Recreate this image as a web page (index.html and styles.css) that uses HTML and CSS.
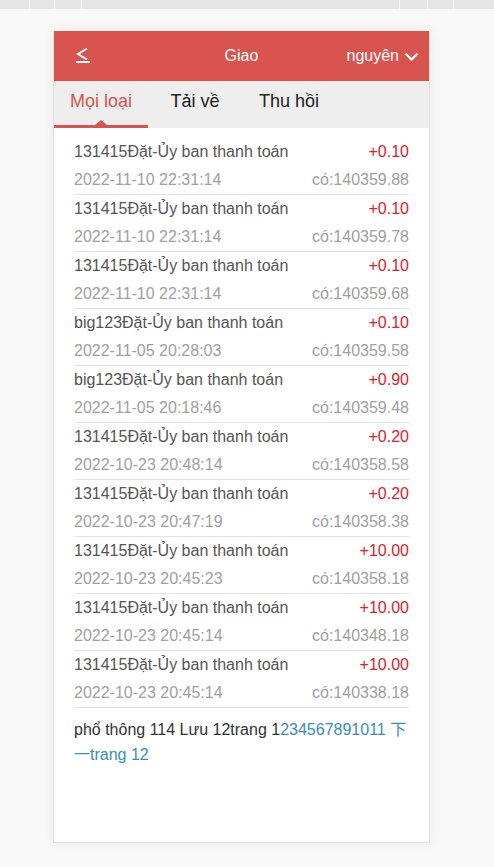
FILE: index.html
```html
<!DOCTYPE html>
<html lang="vi">
<head>
<meta charset="utf-8">
<title>Giao</title>
<link rel="stylesheet" href="styles.css">
</head>
<body>
<div class="topstrip">
  <div class="seg s1"></div><div class="seg s2"></div><div class="seg s3"></div><div class="seg grow"></div><div class="seg s4"></div><div class="seg s5"></div><div class="seg s6"></div>
</div>
<div class="card">
  <header class="header">
    <span class="back">
      <svg width="16" height="16" viewBox="0 0 16 16"><polyline points="12,1.5 3,7 12,12.5" fill="none" stroke="#fff" stroke-width="2"/><line x1="1" y1="15" x2="15" y2="15" stroke="#fff" stroke-width="2"/></svg>
    </span>
    <span class="title">Giao</span>
    <span class="user">nguyên
      <svg width="15" height="10" viewBox="0 0 15 10"><polyline points="1.5,1.5 7.5,7.5 13.5,1.5" fill="none" stroke="#fff" stroke-width="2.4"/></svg>
    </span>
  </header>
  <nav class="tabs">
    <span class="tab active">Mọi loại</span>
    <span class="tab">Tải về</span>
    <span class="tab">Thu hồi</span>
  </nav>
  <div class="list">
    <div class="item"><div class="row"><span>131415Đặt-Ủy ban thanh toán</span><span class="amt">+0.10</span></div><div class="row sub"><span>2022-11-10 22:31:14</span><span>có:140359.88</span></div></div>
    <div class="item"><div class="row"><span>131415Đặt-Ủy ban thanh toán</span><span class="amt">+0.10</span></div><div class="row sub"><span>2022-11-10 22:31:14</span><span>có:140359.78</span></div></div>
    <div class="item"><div class="row"><span>131415Đặt-Ủy ban thanh toán</span><span class="amt">+0.10</span></div><div class="row sub"><span>2022-11-10 22:31:14</span><span>có:140359.68</span></div></div>
    <div class="item"><div class="row"><span>big123Đặt-Ủy ban thanh toán</span><span class="amt">+0.10</span></div><div class="row sub"><span>2022-11-05 20:28:03</span><span>có:140359.58</span></div></div>
    <div class="item"><div class="row"><span>big123Đặt-Ủy ban thanh toán</span><span class="amt">+0.90</span></div><div class="row sub"><span>2022-11-05 20:18:46</span><span>có:140359.48</span></div></div>
    <div class="item"><div class="row"><span>131415Đặt-Ủy ban thanh toán</span><span class="amt">+0.20</span></div><div class="row sub"><span>2022-10-23 20:48:14</span><span>có:140358.58</span></div></div>
    <div class="item"><div class="row"><span>131415Đặt-Ủy ban thanh toán</span><span class="amt">+0.20</span></div><div class="row sub"><span>2022-10-23 20:47:19</span><span>có:140358.38</span></div></div>
    <div class="item"><div class="row"><span>131415Đặt-Ủy ban thanh toán</span><span class="amt">+10.00</span></div><div class="row sub"><span>2022-10-23 20:45:23</span><span>có:140358.18</span></div></div>
    <div class="item"><div class="row"><span>131415Đặt-Ủy ban thanh toán</span><span class="amt">+10.00</span></div><div class="row sub"><span>2022-10-23 20:45:14</span><span>có:140348.18</span></div></div>
    <div class="item"><div class="row"><span>131415Đặt-Ủy ban thanh toán</span><span class="amt">+10.00</span></div><div class="row sub"><span>2022-10-23 20:45:14</span><span>có:140338.18</span></div></div>
  </div>
  <div class="pager">phổ thông 114 Lưu 12trang 1<span class="link">234567891011 下一trang 12</span></div>
</div>
</body>
</html>
```

FILE: styles.css
```css
html, body {
  margin: 0;
  padding: 0;
}
body {
  background: #f8f8f8;
  font-family: "Liberation Sans", Arial, "Noto Sans CJK SC", sans-serif;
  height: 867px;
  overflow: hidden;
}
.topstrip {
  display: flex;
  height: 9px;
  background: #e5e5e5;
}
.seg {
  border-right: 1px solid #f6f6f6;
  height: 9px;
}
.s1 { width: 29px; }
.s2 { width: 24px; }
.s3 { width: 26px; }
.grow { flex: 1; }
.s4 { width: 27px; }
.s5 { width: 25px; }
.s6 { width: 40px; border-right: none; }

.card {
  margin: 22px 0 0 53px;
  width: 375px;
  height: 811px;
  background: #fff;
  border: 1px solid #e2e2e2;
  border-top: none;
  box-shadow: 0 0 12px rgba(0,0,0,0.06);
}
.header {
  height: 50px;
  background: #d9534f;
  color: #fff;
  display: flex;
  align-items: center;
  justify-content: space-between;
  padding: 0 10px 0 21px;
  font-size: 16px;
  position: relative;
}
.back {
  display: flex;
  width: 16px;
  height: 16px;
  margin-top: -2px;
}
.title {
  position: absolute;
  left: 0;
  right: 0;
  text-align: center;
  pointer-events: none;
}
.user {
  display: flex;
  align-items: center;
  gap: 5px;
}
.user svg { margin-top: 2px; }
.tabs {
  display: flex;
  height: 47px;
  background: #eeeeee;
}
.tab {
  position: relative;
  width: 94px;
  text-align: center;
  font-size: 18px;
  line-height: 40px;
  color: #222;
}
.tab.active {
  color: #d9534f;
}
.tab.active::after {
  content: "";
  position: absolute;
  left: 0;
  right: 0;
  bottom: 0;
  height: 3px;
  background: #d9534f;
}
.tab.active::before {
  content: "";
  position: absolute;
  left: 41px;
  bottom: 3px;
  border-left: 6px solid transparent;
  border-right: 6px solid transparent;
  border-bottom: 5px solid #d9534f;
}
.list {
  padding: 10px 20px 0 20px;
}
.item {
  border-bottom: 1px solid #e3e3e3;
}
.row {
  display: flex;
  justify-content: space-between;
  height: 28px;
  line-height: 28px;
  font-size: 16px;
  color: #555;
}
.row.sub {
  color: #a0a0a0;
}
.amt {
  color: #e0202c;
}
.pager {
  padding: 9px 20px 0 20px;
  font-size: 16px;
  line-height: 25px;
  color: #333;
}
.pager .link {
  color: #3a8dbb;
}
```
